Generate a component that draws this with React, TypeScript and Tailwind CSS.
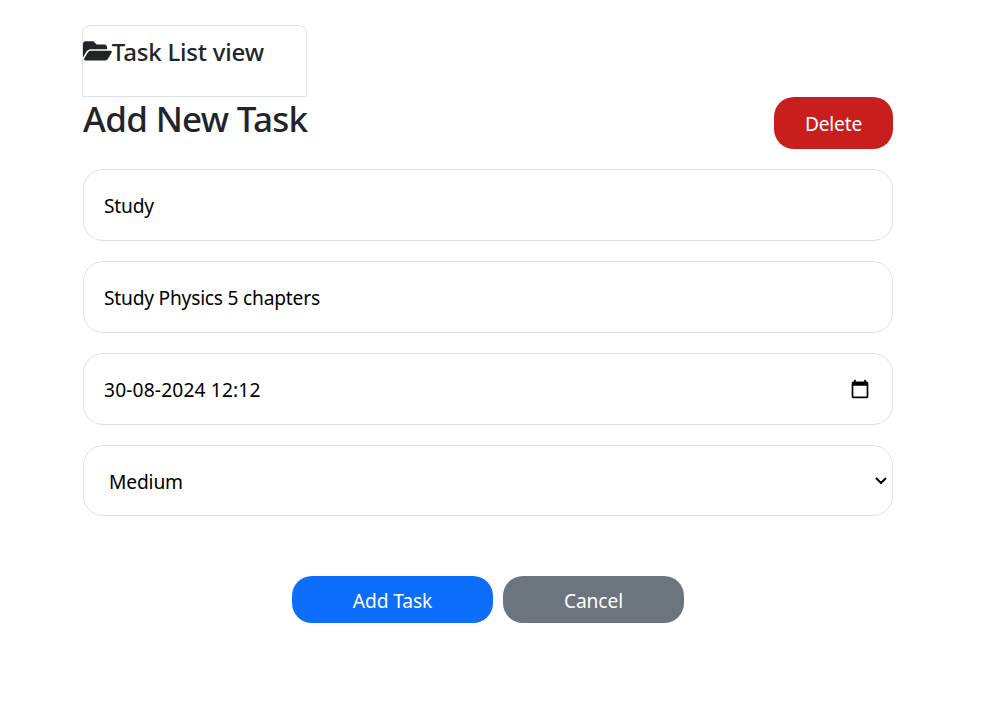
import { FaFolderOpen } from "react-icons/fa";

const field =
  "flex h-[72px] items-center rounded-[20px] border border-[#dee2e6] pt-0.5 pl-5 text-[19.2px] text-black";

function CalendarIcon() {
  return (
    <svg className="-mt-[3px]" width="20" height="20" viewBox="0 0 24 24" fill="black">
      <path d="M20 3h-1V1h-2v2H7V1H5v2H4c-1.100 0-2 .9-2 2v16c0 1.100.9 2 2 2h16c1.100 0 2-.9 2-2V5c0-1.100-.9-2-2-2zm0 18H4V8h16v13z" />
    </svg>
  );
}

export default function App() {
  return (
    <div className="h-[712px] bg-white pt-[25px] pl-[82px] font-['Noto_Sans','Open_Sans',sans-serif] text-[#212529]">
      <div className="flex h-[72px] w-[225px] items-start rounded-t-lg border border-[#dee2e6] pt-[11px]">
        <h4 className="flex items-center text-[24px] leading-[30px] font-medium tracking-[-0.2px] whitespace-nowrap">
          <FaFolderOpen className="-mt-0.5 h-[25.6px] w-[28.8px] shrink-0" />
          <span>Task List view</span>
        </h4>
      </div>
      <main className="ml-px w-[810px]">
        <header className="flex h-[52px] justify-between">
          <h1 className="text-[35px] leading-[44px] font-medium tracking-[-0.7px] whitespace-nowrap">
            <span>Add New Task</span>
          </h1>
          <button className="flex h-[52px] w-[119px] items-center justify-center rounded-[20px] bg-[#c81e1e] pt-0.5 text-[19.2px] tracking-[-0.2px] text-white">
            <span>Delete</span>
          </button>
        </header>
        <form className="mt-5 flex flex-col gap-5">
          <div className={field + " tracking-[-0.22px]"}>
            <span>Study</span>
          </div>
          <div className={field + " tracking-[-0.22px]"}>
            <span>Study Physics 5 chapters</span>
          </div>
          <div className={field + " justify-between pr-[22px] tracking-[0.15px]"}>
            <span>30-08-2024 12:12</span>
            <CalendarIcon />
          </div>
          <div className="flex h-[71px] items-center justify-between rounded-[20px] border border-[#dee2e6] pt-[3px] pr-[5px] pl-[25px] text-[19.2px] tracking-[-0.15px] text-black">
            <span>Medium</span>
            <svg className="-mt-[3px]" width="12" height="8" viewBox="0 0 12 8" fill="none" stroke="black" strokeWidth="2">
              <path d="M1 1l5 5 5-5" />
            </svg>
          </div>
        </form>
        <div className="mt-[60px] flex justify-center gap-2.5 text-[19.2px] tracking-[-0.1px] text-white">
          <button className="h-[47px] w-[201px] rounded-[20px] bg-[#0d6efd] pt-1">
            <span>Add Task</span>
          </button>
          <button className="h-[47px] w-[181px] rounded-[20px] bg-[#6c757d] pt-1">
            <span>Cancel</span>
          </button>
        </div>
      </main>
    </div>
  );
}
